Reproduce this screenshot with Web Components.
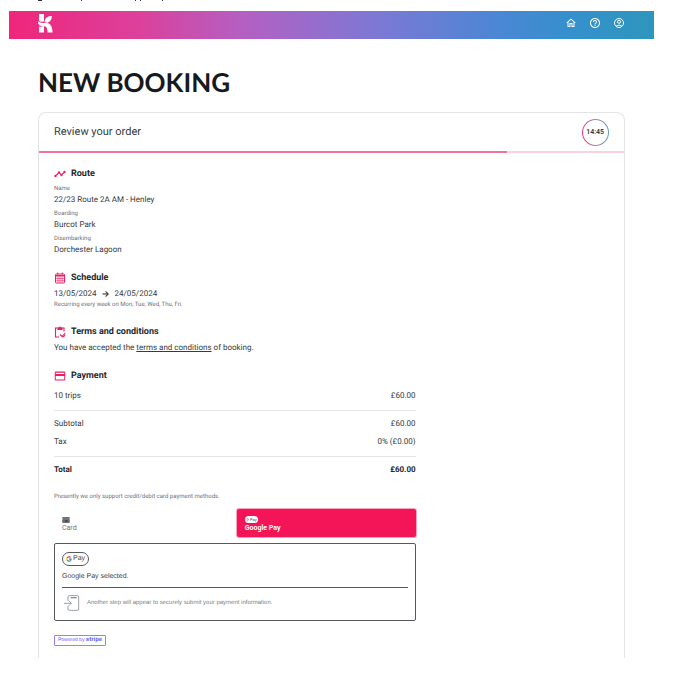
<!DOCTYPE html>
<html lang="en">
<head>
<meta charset="utf-8">
<meta name="viewport" content="width=device-width, initial-scale=1">
<title>New booking</title>
<style>
html,body{margin:0;background:#fff}
body{font-family:Roboto,"Liberation Sans",sans-serif;color:#363b40;font-size:8px;line-height:12px;overflow:hidden;text-rendering:geometricPrecision}
</style>
</head>
<body>
<booking-page></booking-page>
<script>
const icons = {
  home:'<path d="M12 5.7 17 10.200v7.800h-2v-6H9v6H7v-7.800l5-4.500M12 3 2 12h3v8h6v-6h2v6h6v-8h3z"/>',
  help:'<path d="M11 18h2v-2h-2v2zm1-16C6.480 2 2 6.480 2 12s4.480 10 10 10 10-4.480 10-10S17.520 2 12 2zm0 18c-4.410 0-8-3.590-8-8s3.590-8 8-8 8 3.590 8 8-3.590 8-8 8zm0-14c-2.210 0-4 1.790-4 4h2c0-1.100.9-2 2-2s2 .9 2 2c0 2-3 1.750-3 5h2c0-2.250 3-2.500 3-5 0-2.210-1.790-4-4-4z"/>',
  account:'<g fill="none" stroke="currentColor" stroke-width="2"><circle cx="12" cy="12" r="9"/><circle cx="12" cy="9.500" r="3"/><path d="M6 18.500q6-5 12 0"/></g>',
  route:'<path stroke="currentColor" stroke-width=".8" d="M23 8c0 1.100-.9 2-2 2-.18 0-.35-.02-.51-.07l-3.560 3.550c.05.160.07.340.07.520 0 1.100-.9 2-2 2s-2-.9-2-2c0-.18.020-.36.070-.52l-2.550-2.550c-.16.050-.34.070-.52.070s-.36-.02-.52-.07l-4.550 4.560c.05.160.07.330.07.510 0 1.100-.9 2-2 2s-2-.9-2-2 .9-2 2-2c.18 0 .35.020.51.070l4.560-4.550C8.020 9.360 8 9.180 8 9c0-1.100.9-2 2-2s2 .9 2 2c0 .18-.02.360-.07.520l2.550 2.550c.16-.05.340-.07.520-.07s.36.020.52.070l3.550-3.560C19.020 8.350 19 8.180 19 8c0-1.100.9-2 2-2s2 .9 2 2z"/>',
  calendar:'<g fill="none" stroke="currentColor" stroke-width="2"><rect x="3" y="4" width="18" height="18" rx="1.500"/><path stroke-width="3" d="M3 7.500h18"/><path d="M7.500 1v4M16.500 1v4"/><path stroke-width="1.200" d="M4 13h16M4 17.500h16M7.800 9v12M12 9v12M16.200 9v12"/></g>',
  terms:'<g fill="none" stroke="currentColor" stroke-width="2.200"><path d="M10 22H3V4h17v7M12 17l4 4 6.500-7"/><path d="M22 17q-1 5-6 5"/><path fill="currentColor" stroke="none" d="M7 3h3q2-4 4 0h3v5H7z"/></g>',
  card:'<path d="M20 3H4c-1.500 0-2.500 1-2.500 2.500v13C1.500 20 2.500 21 4 21h16c1.500 0 2.500-1 2.500-2.500v-13C22.500 4 21.500 3 20 3zm.5 16h-17v-7h17v7zm0-11h-17V5.500h17V8z"/>',
  arrow:'<path stroke="currentColor" d="m12 4-1.410 1.410L16.170 11H2v2h14.170l-5.580 5.590L12 20l8-8z"/>',
  smallcard:'<path d="M1 4h22v4H1zM1 10h22v10H1z"/><path stroke="#fff" stroke-width="2" d="M4 15h4M17 15h3"/>',
  redirect:'<g fill="none" stroke="currentColor" stroke-width="1.300"><path d="M6 9V3q0-2 2-2h12q2 0 2 2v18q0 2-2 2H8q-2 0-2-2v-5M0 12.500h11M7.500 9l3.500 3.500L7.500 16"/><path stroke-width="2" d="M10 4h9"/></g>',
  google:'<g fill="none" stroke-width="5"><path stroke="#ea4335" d="M4.500 7.500A9 9 0 0 1 18.500 5.500"/><path stroke="#fbbc04" d="M4.500 7.500a9 9 0 0 0 0 9"/><path stroke="#34a853" d="M4.500 16.500a9 9 0 0 0 13 2.500"/><path stroke="#4285f4" d="M17.500 19A9 9 0 0 0 20.500 12H12"/></g>'
};
function define(name, css, html){
  customElements.define(name, class extends HTMLElement{
    connectedCallback(){
      if(this.shadowRoot) return;
      const t=document.createElement('template');
      t.innerHTML='<style>*{box-sizing:border-box}'+css+'</style>'+(typeof html==='function'?html(this):html);
      this.attachShadow({mode:'open'}).append(t.content.cloneNode(true));
    }
  });
}
define('ui-icon', ':host{display:inline-block;flex:none;width:12px;height:12px}svg{display:block;width:100%;height:100%}',
  e=>`<svg viewBox="0 0 24 24" fill="currentColor" aria-hidden="true">${icons[e.getAttribute('name')]}</svg>`);

define('booking-nav', `
:host{display:flex;align-items:center;height:28px;padding:0 29px;background:linear-gradient(90deg,#ef267a 0%,#dc409b 20%,#b45fc2 36%,#7d78d4 57%,#4b87d4 76%,#368fcd 86%,#2d96bd 100%);color:#fff}
a{color:inherit;display:block}.logo svg{display:block;width:15px;height:19px;margin-bottom:4px}
nav{margin-left:auto;display:flex;gap:12px;padding-bottom:5px}nav ui-icon{display:block;width:12px;height:12px}`,
`<a class="logo" href="#" aria-label="Home"><svg viewBox="0 0 15 19" fill="#fff"><path d="M1 0h5v7.500Q3 8 1 7zM1 12.500q3 .5 5-.5v6.500H1zM6.500 7.500Q7 2 14 2 13.500 7.500 9 9zM0 7.500Q3 9.500 7 8.800c5 0 7.500 3 7.500 9.700H9.500c0-4-1-6-3-6.300C3 12.500 0 11.500 0 7.500z"/></svg></a>
<nav aria-label="Account"><a href="#" aria-label="Dashboard"><ui-icon name="home"></ui-icon></a><a href="#" aria-label="Help"><ui-icon name="help"></ui-icon></a><a href="#" aria-label="Profile"><ui-icon name="account"></ui-icon></a></nav>`);

define('countdown-ring', `
:host{display:grid;place-items:center;width:27px;height:27px;border-radius:50%;border:1px solid transparent;background:linear-gradient(#fff,#fff) padding-box,linear-gradient(90deg,#ef3a78,#a58aa8 55%,#5c9cc8) border-box;font-size:7px;line-height:8px;font-weight:500;color:#25292d}`,
`<slot></slot>`);

define('order-section', `
:host{display:block}
h2{display:flex;align-items:center;gap:5px;margin:0 0 4px;height:12px;font-size:9px;line-height:12px;font-weight:700;color:#24282c}
ui-icon{color:#ef1d62}`,
e=>`<h2><ui-icon name="${e.getAttribute('icon')}"></ui-icon>${e.getAttribute('heading')}</h2><slot></slot>`);

define('labelled-value', `
:host{display:block;margin-bottom:3px}
:host(:last-child){margin-bottom:0}
span{display:block;font-size:6px;line-height:10px;color:#6c7074}`,
e=>`<span>${e.getAttribute('label')}</span><slot></slot>`);

define('price-table', `
:host{display:block}
table{width:100%;border-collapse:collapse;font-size:8px;line-height:12px}
th,td{padding:3px 0;height:18px;font-weight:400;text-align:left}
td{text-align:right}
.rule th,.rule td{border-top:1px solid #e6e6e6;padding-top:7px}
.last th,.last td{padding-bottom:8px}
.total th,.total td{font-weight:700;color:#24282c}`,
`<table><tbody>
<tr class="last"><th scope="row">10 trips</th><td>£60.00</td></tr>
<tr class="rule"><th scope="row">Subtotal</th><td>£60.00</td></tr>
<tr class="last"><th scope="row">Tax</th><td>0% (£0.00)</td></tr>
<tr class="rule total"><th scope="row">Total</th><td>£60.00</td></tr>
</tbody></table>`);

define('gpay-mark', `
:host{display:inline-flex;align-items:center;justify-content:center;gap:1px;width:27px;height:14px;border:1px solid #55595d;border-radius:8px;background:#fff;color:#44484c;font-size:7px;line-height:8px;font-weight:400}
ui-icon{width:6px;height:6px}
:host([small]){width:13px;height:7px;border:0;font-size:4px;line-height:5px}
:host([small]) ui-icon{width:3px;height:3px}`,
`<ui-icon name="google"></ui-icon><span>Pay</span>`);

define('payment-method', `
:host{display:grid;grid-template-columns:1fr 1fr;gap:4px}
button{display:flex;flex-direction:column;justify-content:center;align-items:flex-start;height:28px;padding:2px 8px 0;border:0;border-radius:2px;background:none;font:400 7px/9px Roboto,sans-serif;color:#6c7074;text-align:left}
button ui-icon{width:8px;height:8px;color:#44484c}
.on{background:#f41458;color:#fff;font-weight:700;box-shadow:0 0 0 1px #f9a3bd}
.on gpay-mark{margin-bottom:1px}`,
`<button type="button" aria-pressed="false"><ui-icon name="smallcard"></ui-icon>Card</button><button type="button" class="on" aria-pressed="true"><gpay-mark small></gpay-mark>Google Pay</button>`);

define('payment-panel', `
:host{display:block;border:1px solid #55595f;border-radius:2px;padding:8px 7px 9px;font-family:"Liberation Sans",Arial,sans-serif}
gpay-mark{display:flex}
p{margin:5px 0 4px;font-size:7px;line-height:12px;color:#3b3f43}
div{display:flex;align-items:center;gap:7px;border-top:1px solid #55595f;padding:7px 2px 0;font-size:6px;line-height:10px;color:#7b7f83}
div ui-icon{width:16px;height:16px;color:#8d9195}`,
`<gpay-mark></gpay-mark><p>Google Pay selected.</p><div><ui-icon name="redirect"></ui-icon>Another step will appear to securely submit your payment information.</div>`);

define('order-card', `
:host{display:block;border:1px solid #e4e5e6;border-bottom:0;border-radius:8px 8px 0 0}
header{display:flex;align-items:center;justify-content:space-between;height:38px;padding:0 15px}
h2{margin:0;font-size:11px;line-height:16px;font-weight:400}
.bar{height:2px;background:#fbd3de}.bar i{display:block;height:2px;width:80%;background:#f4719a}
.body{padding:15px 15px 12px;display:flex;flex-direction:column}`,
`<header><h2>Review your order</h2><countdown-ring>14:45</countdown-ring></header><div class="bar" role="progressbar" aria-label="Booking progress" aria-valuenow="80"><i></i></div><div class="body"><slot></slot></div>`);

define('booking-page', `
:host{display:block;padding:0 5% 0 9px}
.top{display:block;width:160px;height:11px}
main{padding:0 29px}
h1{margin:28px 0 15px;font:700 26px/30px Lato,sans-serif;color:#16191d}
order-section+order-section{margin-top:16px}
.dates{display:flex;align-items:center;gap:5px}.dates ui-icon{width:8px;height:8px;color:#222}
small{display:block;font-size:6px;line-height:10px;color:#6c7074}
p{margin:0}a{color:inherit}
.pay{width:65.2%}price-table{margin-top:5px}.pay small{margin:13px 0 7px}
payment-panel{margin:6px 0 12px}
.stripe{display:inline-block;padding:0 3px;border:1px solid #8d85ff;border-radius:1px;font:400 5px/9px "Liberation Sans",sans-serif;color:#635bff;text-decoration:none}
.stripe b{font-size:6px}`,
`<svg class="top" viewBox="0 0 160 11" fill="none" stroke="#333" aria-hidden="true"><path d="M29 .5h4M72.500 0v1M126.500 0v1M131.500 0v1M153.500 0v1"/></svg>
<booking-nav></booking-nav><main><h1>NEW BOOKING</h1><order-card>
<order-section icon="route" heading="Route"><labelled-value label="Name">22/23 Route 2A AM - Henley</labelled-value><labelled-value label="Boarding">Burcot Park</labelled-value><labelled-value label="Disembarking">Dorchester Lagoon</labelled-value></order-section>
<order-section icon="calendar" heading="Schedule"><div class="dates">13/05/2024<ui-icon name="arrow"></ui-icon>24/05/2024</div><small>Recurring every week on Mon, Tue, Wed, Thu, Fri.</small></order-section>
<order-section icon="terms" heading="Terms and conditions"><p>You have accepted the <a href="#">terms and conditions</a> of booking.</p></order-section>
<order-section class="pay" icon="card" heading="Payment"><price-table></price-table><small>Presently we only support credit/debit card payment methods.</small><payment-method></payment-method><payment-panel></payment-panel><a class="stripe" href="#">Powered by <b>stripe</b></a></order-section>
</order-card></main>`);
</script>
</body>
</html>
